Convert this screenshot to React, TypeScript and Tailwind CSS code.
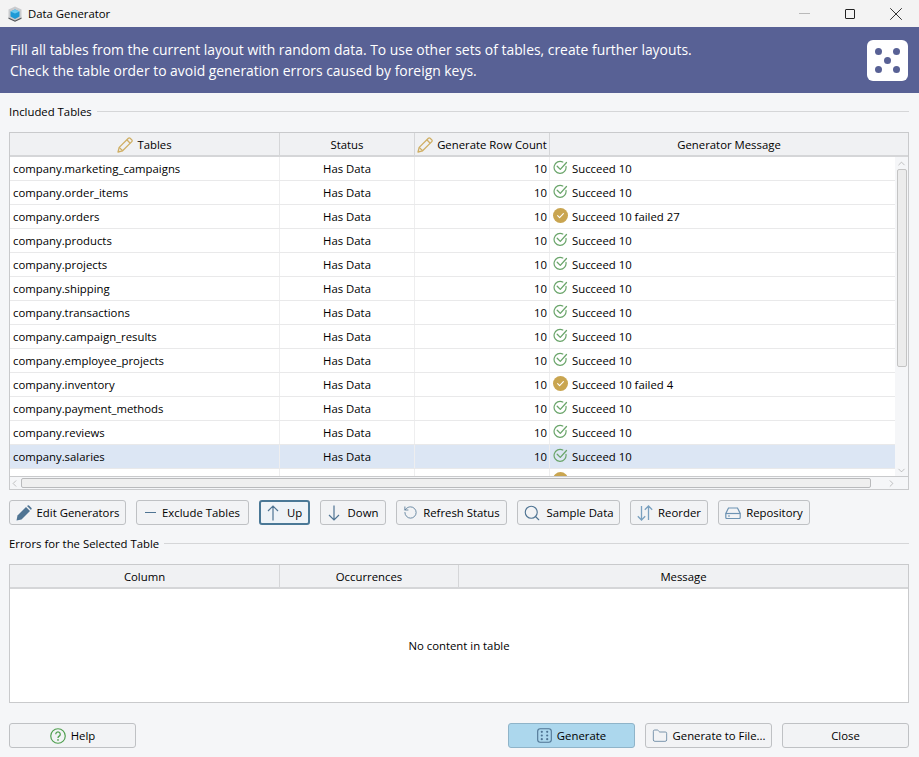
import React from "react";
import { RotateCw, Search, ChevronUp, ChevronDown, ChevronLeft, ChevronRight, Folder, X } from "lucide-react";

const rows = [
  ["company.marketing_campaigns", "Succeed 10", false],
  ["company.order_items", "Succeed 10", false],
  ["company.orders", "Succeed 10 failed 27", true],
  ["company.products", "Succeed 10", false],
  ["company.projects", "Succeed 10", false],
  ["company.shipping", "Succeed 10", false],
  ["company.transactions", "Succeed 10", false],
  ["company.campaign_results", "Succeed 10", false],
  ["company.employee_projects", "Succeed 10", false],
  ["company.inventory", "Succeed 10 failed 4", true],
  ["company.payment_methods", "Succeed 10", false],
  ["company.reviews", "Succeed 10", false],
  ["company.salaries", "Succeed 10", false],
] as const;

const OkIcon = () => (
  <svg width="15" height="15" viewBox="0 0 15 15" fill="none" className="shrink-0 -translate-y-[1px]">
    <path d="M13 6.4A6 6 0 1 1 9.8 2" stroke="#6aa56a" strokeWidth="1.2" strokeLinecap="round" />
    <path d="M4.2 6.2l3.1 3.2 6.2-6.9" stroke="#6aa56a" strokeWidth="1.3" strokeLinecap="round" strokeLinejoin="round" />
  </svg>
);

const WarnIcon = () => (
  <svg width="15" height="15" viewBox="0 0 15 15" fill="none" className="shrink-0 -translate-y-[1px]">
    <circle cx="7.5" cy="7.5" r="7.5" fill="#c9a550" />
    <path d="M4.6 7.7l2 2 3.8-4" stroke="#fff" strokeWidth="1.1" strokeLinecap="round" strokeLinejoin="round" />
  </svg>
);

const GoldPencil = () => (
  <svg width="16" height="16" viewBox="0 0 16 16" fill="none" stroke="#cfae63" strokeWidth="1.3" strokeLinejoin="round" className="mr-[4px] shrink-0">
    <path d="M1 15l1.2-4.6L11.4 1.2a1.2 1.2 0 0 1 1.7 0l1.7 1.7a1.2 1.2 0 0 1 0 1.7L5.6 13.8z" />
    <path d="M2.2 10.4l3.4 3.4M9.8 2.8l3.4 3.4" />
  </svg>
);

const Arrow = ({ down }: { down?: boolean }) => (
  <svg width="12" height="16" viewBox="0 0 12 16" fill="none" stroke="#4f7493" strokeWidth="1.2" className={"shrink-0 " + (down ? "rotate-180" : "")}>
    <path d="M6 15.5V1M1 6l5-5 5 5" />
  </svg>
);

const Section = ({ title }: { title: string }) => (
  <div className="flex items-start gap-[5px] h-5">
    <span className="whitespace-nowrap mt-[1px]">{title}</span>
    <div className="flex-1 h-px bg-[#d5d6d8] mt-[8px]" />
  </div>
);

const Button = ({ icon, label, className }: { icon?: React.ReactNode; label: string; className: string }) => (
  <button className={"h-[25px] flex items-center justify-center gap-[5px] rounded-[3px] border whitespace-nowrap " + className}>
    {icon}
    {label}
  </button>
);

const plain = "border-[#bfc1c4] bg-[#f2f3f5] ";

const Th = ({ className, children }: { className: string; children: React.ReactNode }) => (
  <div className={"flex items-center justify-center border-r border-[#d5d6d8] shrink-0 h-full pt-[2px] " + className}>{children}</div>
);

function Dot() {
  return <span className="w-[7px] h-[7px] rounded-full bg-[#586195]" />;
}

export default function App() {
  return (
    <div className="w-[919px] h-[757px] flex flex-col bg-[#f5f6f8] text-[11.35px] leading-4 text-black font-['Open_Sans',sans-serif] overflow-hidden">
      {/* title bar */}
      <div className="h-[27px] bg-[#f3f3f3] flex items-center pl-[7px] shrink-0">
        <svg width="16" height="16" viewBox="0 0 16 16" className="shrink-0">
          <path d="M8 0.5 14.5 3.5v9L8 15.5l-6.5-3v-9z" fill="#c9cbce" />
          <path d="M8 3.5 12.5 5.5v5L8 13l-4.5-2.5v-5z" fill="#1e9ad6" />
          <path d="M8 3.5 12.5 5.5 8 7.5l-4.5-2z" fill="#6cc9ef" />
          <path d="M1.5 11.5 8 14.5l6.5-3v1.2L8 15.8l-6.5-3.1z" fill="#55585c" />
        </svg>
        <span className="ml-[5px]">Data Generator</span>
        <div className="ml-auto flex items-center">
          <div className="w-[11px] h-px bg-[#b9b9b9] mr-[35px]" />
          <div className="w-[10px] h-[10px] border border-[#222] rounded-[1px] mr-[30px]" />
          <X size={22} strokeWidth={1} className="mr-[12px] -my-1 text-[#222]" />
        </div>
      </div>

      {/* banner */}
      <div className="h-[66px] bg-[#586195] text-white text-[13.9px] leading-[21px] flex items-center justify-between pl-[10px] pr-[11px] shrink-0">
        <div>
          <div>Fill all tables from the current layout with random data. To use other sets of tables, create further layouts.</div>
          <div>Check the table order to avoid generation errors caused by foreign keys.</div>
        </div>
        <div className="w-[41px] h-[41px] rounded-[6px] bg-white grid grid-cols-3 grid-rows-3 p-[7px] place-items-center">
          <Dot /><span /><Dot />
          <span /><Dot /><span />
          <Dot /><span /><Dot />
        </div>
      </div>

      <div className="flex-1 flex flex-col pl-[9px] pr-[10px] min-h-0">
        <div className="mt-[10px]">
          <Section title="Included Tables" />
        </div>

        {/* included tables */}
        <div className="mt-[9px] h-[358px] border border-[#c9cacc] bg-white flex flex-col shrink-0">
          <div className="h-6 flex bg-[#f0f1f3] border-b-2 border-[#d5d6d8] shrink-0">
            <Th className="w-[270px]"><GoldPencil />Tables</Th>
            <Th className="w-[135px]">Status</Th>
            <Th className="w-[135px] whitespace-nowrap"><GoldPencil />Generate Row Count</Th>
            <div className="flex-1 flex items-center justify-center pt-[2px]">Generator Message</div>
          </div>
          <div className="flex-1 flex min-h-0">
            <div className="flex-1 overflow-hidden">
              {rows.map(([name, msg, warn], i) => (
                <div key={name} className={"h-6 flex items-center border-b border-[#e9e9ea] " + (i === 12 ? "bg-[#dce6f4]" : "")}>
                  <div className="w-[270px] pl-[3px] border-r border-[#eeeeef] h-full flex items-center shrink-0">{name}</div>
                  <div className="w-[135px] text-center border-r border-[#eeeeef] h-full flex items-center justify-center shrink-0">Has Data</div>
                  <div className="w-[135px] pr-[2px] border-r border-[#eeeeef] h-full flex items-center justify-end shrink-0">10</div>
                  <div className="flex items-center gap-[4px] pl-[3px]">
                    {warn ? <WarnIcon /> : <OkIcon />}
                    {msg}
                  </div>
                </div>
              ))}
              <div className="h-6 flex">
                <div className="w-[270px] border-r border-[#eeeeef] shrink-0" />
                <div className="w-[135px] border-r border-[#eeeeef] shrink-0" />
                <div className="w-[135px] border-r border-[#eeeeef] shrink-0" />
                <div className="pl-[3px] pt-[4px]"><WarnIcon /></div>
              </div>
            </div>
            {/* vertical scrollbar */}
            <div className="w-[13px] bg-[#f5f6f8] flex flex-col items-center shrink-0">
              <ChevronUp size={11} strokeWidth={1.3} className="text-[#9a9a9a] mt-[1px]" />
              <div className="w-[10px] h-[198px] rounded-[2px] border border-[#c4c4c4] bg-[#ececec]" />
              <ChevronDown size={11} strokeWidth={1.3} className="text-[#9a9a9a] mt-auto" />
            </div>
          </div>
          {/* horizontal scrollbar */}
          <div className="h-[13px] bg-[#f5f6f8] border-t border-[#c9cacc] flex items-center shrink-0">
            <ChevronLeft size={11} strokeWidth={1.3} className="text-[#9a9a9a] -ml-[1px]" />
            <div className="w-[850px] h-[10px] ml-[1px] rounded-[2px] border border-[#b9babc] bg-[#efefef]" />
            <ChevronRight size={11} strokeWidth={1.3} className="text-[#9a9a9a] ml-[15px]" />
          </div>
        </div>

        {/* action buttons */}
        <div className="mt-[10px] flex gap-[10px] shrink-0">
          <Button
            className={plain + "w-[117px] gap-[4px]"}
            label="Edit Generators"
            icon={
              <svg width="16" height="16" viewBox="0 0 16 16" className="shrink-0">
                <path d="M0.5 15.5l1-5 8.5-8.5 4 4-8.5 8.5z" fill="#4f7493" />
                <path d="M11 1l.8-.6a1 1 0 0 1 1.2 0l2.5 2.5a1 1 0 0 1 0 1.2L15 5z" fill="#4f7493" />
              </svg>
            }
          />
          <Button
            className={plain + "w-[113px]"}
            label="Exclude Tables"
            icon={<span className="w-[11px] h-px bg-[#4f7493] mr-[1px] shrink-0" />}
          />
          <Button className="w-[51px] border-2 border-[#4a7896] bg-[#eef3f7] gap-[8px]" label="Up" icon={<Arrow />} />
          <Button className={plain + "w-[66px] gap-[8px]"} label="Down" icon={<Arrow down />} />
          <Button
            className={plain + "w-[111px]"}
            label="Refresh Status"
            icon={<RotateCw size={15} strokeWidth={1.3} className="text-[#4f7493] -scale-x-100" />}
          />
          <Button className={plain + "w-[103px] gap-[3px]"} label="Sample Data" icon={<Search size={18} strokeWidth={1.5} className="text-[#4f7493]" />} />
          <Button
            className={plain + "w-[78px] gap-[4px]"}
            label="Reorder"
            icon={
              <svg width="16" height="16" viewBox="0 0 16 16" fill="none" stroke="#7aa0bf" strokeWidth="1.3" className="shrink-0">
                <path d="M4.5 1v14M0.8 11.3 4.5 15l3.7-3.7" />
                <path d="M11.5 15V1M7.8 4.7 11.5 1l3.7 3.7" />
              </svg>
            }
          />
          <Button
            className={plain + "w-[92px] gap-[4px]"}
            label="Repository"
            icon={
              <svg width="16" height="12" viewBox="0 0 16 12" fill="none" stroke="#6d93b3" strokeWidth="1.2" className="shrink-0">
                <path d="M0.8 6.5 3.5 1h9l2.7 5.5v4a1 1 0 0 1-1 1H1.8a1 1 0 0 1-1-1z" />
                <path d="M0.8 6.5h14.4" />
                <path d="M3 9h2" />
              </svg>
            }
          />
        </div>

        <div className="mt-[10px]">
          <Section title="Errors for the Selected Table" />
        </div>

        {/* errors table */}
        <div className="mt-[9px] h-[139px] border border-[#c9cacc] bg-white flex flex-col shrink-0">
          <div className="h-6 flex bg-[#f0f1f3] border-b-2 border-[#d5d6d8] shrink-0">
            <Th className="w-[270px]">Column</Th>
            <Th className="w-[179px]">Occurrences</Th>
            <div className="flex-1 flex items-center justify-center pt-[2px]">Message</div>
          </div>
          <div className="flex-1 flex items-center justify-center">No content in table</div>
        </div>

        {/* footer */}
        <div className="mt-[20px] flex gap-[10px] shrink-0">
          <Button
            className={plain + "w-[127px] mr-auto gap-[4px]"}
            label="Help"
            icon={
              <svg width="16" height="16" viewBox="0 0 15 15" fill="none" className="shrink-0">
                <circle cx="7.5" cy="7.5" r="6.8" stroke="#4f9f4f" strokeWidth="1.1" />
                <path d="M5.4 5.8a2.1 2.1 0 1 1 3.2 1.8c-.8.5-1.1.9-1.1 1.7" stroke="#4f9f4f" strokeWidth="1.2" />
                <circle cx="7.5" cy="11.2" r=".8" fill="#4f9f4f" />
              </svg>
            }
          />
          <Button
            className="w-[127px] bg-[#acd7ed] border-[#8fb4c9]"
            label="Generate"
            icon={
              <svg width="15" height="15" viewBox="0 0 15 15" fill="none" className="shrink-0">
                <rect x=".7" y=".7" width="13.6" height="13.6" rx="2.5" stroke="#4f7493" strokeWidth="1.1" />
                <g fill="#4f7493">
                  <circle cx="4.8" cy="3.8" r="1.1" />
                  <circle cx="10.2" cy="3.8" r="1.1" />
                  <circle cx="4.8" cy="7.5" r="1.1" />
                  <circle cx="10.2" cy="7.5" r="1.1" />
                  <circle cx="4.8" cy="11.2" r="1.1" />
                  <circle cx="10.2" cy="11.2" r="1.1" />
                </g>
              </svg>
            }
          />
          <Button className={plain + "w-[127px] gap-[3px]"} label="Generate to File..." icon={<Folder size={16} strokeWidth={1.1} className="text-[#4f7493]" />} />
          <Button className={plain + "w-[127px]"} label="Close" />
        </div>
      </div>
    </div>
  );
}
